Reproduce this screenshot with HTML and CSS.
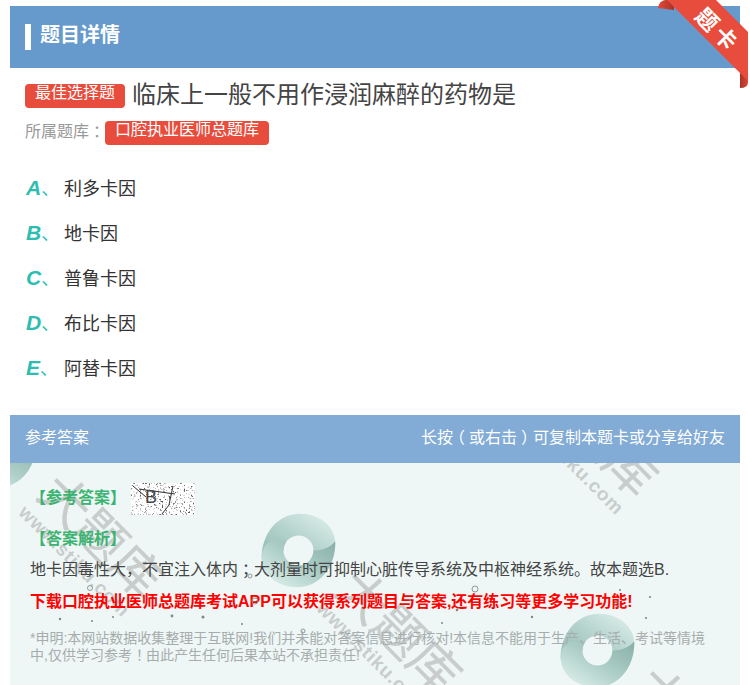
FILE: index.html
```html
<!DOCTYPE html>
<html lang="zh-CN">
<head>
<meta charset="utf-8">
<title>题目详情</title>
<link rel="stylesheet" href="styles.css">
</head>
<body>
<div class="ribbon">
  <svg class="ribbon-art" width="92" height="92" viewBox="0 0 92 92">
    <defs>
      <linearGradient id="foldA" x1="0" y1="0" x2="1" y2="0"><stop offset="0" stop-color="#e04a3c"/><stop offset="1" stop-color="#a93226"/></linearGradient>
      <linearGradient id="foldB" x1="0" y1="0" x2="1" y2="0"><stop offset="0" stop-color="#a93226"/><stop offset="1" stop-color="#dc4638"/></linearGradient>
    </defs>
    <path d="M0 8 Q1 1 7 0 L16 0 L16 10 Z" fill="url(#foldA)"/>
    <path d="M82 72 L90 72 L90 82 Q90 88 82 88 Z" fill="url(#foldB)"/>
    <polygon points="9,0 58,0 90,32 90,81 82,73" fill="#e74c3c"/>
  </svg>
  <span class="ribbon-text">题卡</span>
</div>
<main class="page">
  <header class="head"><i class="head-bar"></i><h1 class="head-title">题目详情</h1></header>
  <section class="question">
    <div class="q-row"><span class="tag">最佳选择题</span><h2 class="q-title">临床上一般不用作浸润麻醉的药物是</h2></div>
    <div class="lib-row"><span class="lib-label">所属题库<span class="cp-right">：</span></span><span class="tag">口腔执业医师总题库</span></div>
  </section>
  <ul class="options">
    <li class="option"><b class="opt-key">A<em>、</em></b><span>利多卡因</span></li>
    <li class="option"><b class="opt-key">B<em>、</em></b><span>地卡因</span></li>
    <li class="option"><b class="opt-key">C<em>、</em></b><span>普鲁卡因</span></li>
    <li class="option"><b class="opt-key">D<em>、</em></b><span>布比卡因</span></li>
    <li class="option"><b class="opt-key">E<em>、</em></b><span>阿替卡因</span></li>
  </ul>
  <section class="answer">
    <div class="ans-head"><span>参考答案</span><span>长按<span class="cp-left">（</span>或右击<span class="cp-right">）</span>可复制本题卡或分享给好友</span></div>
    <div class="ans-body">
      <div class="decor">
        <svg width="0" height="0" class="defs">
          <defs>
            <linearGradient id="swA" x1="0" y1="1" x2="1" y2="0"><stop offset="0" stop-color="#8fb8b0"/><stop offset=".5" stop-color="#b5d3cd"/><stop offset="1" stop-color="#e2f2ee"/></linearGradient>
            <linearGradient id="swB" x1="1" y1="0" x2="0" y2="1"><stop offset="0" stop-color="#86aea6"/><stop offset=".5" stop-color="#aecfc8"/><stop offset="1" stop-color="#e6f5f1"/></linearGradient>
            <symbol id="swirl" viewBox="0 0 100 100">
              <path d="M1 62 C0 28 22 1 52 1 C78 1 99 18 99 40 C99 58 88 68 66 62 A20 20 0 1 0 30 50 C18 50 8 54 1 62 Z" fill="url(#swA)"/>
              <path d="M99 38 C100 72 78 99 48 99 C22 99 1 82 1 60 C1 42 12 32 34 38 A20 20 0 1 0 70 50 C82 50 92 46 99 38 Z" fill="url(#swB)"/>
            </symbol>
            <filter id="grain" x="0" y="0" width="100%" height="100%">
              <feTurbulence type="fractalNoise" baseFrequency=".55" numOctaves="2" seed="7"/>
              <feColorMatrix values="0 0 0 0 0.1  0 0 0 0 0.1  0 0 0 0 0.1  3.4 3.4 0 0 -3.7"/>
            </filter>
          </defs>
        </svg>
        <svg class="swirl swirl-a" viewBox="0 0 100 100"><use href="#swirl"/></svg>
        <svg class="swirl swirl-b" viewBox="0 0 100 100"><use href="#swirl"/></svg>
        <svg class="swirl swirl-c" viewBox="0 0 100 100"><use href="#swirl"/></svg>
        <div class="wm wm-a"><span class="wm-big">大题库</span><span class="wm-small">www.stiku.com</span></div>
        <div class="wm wm-b"><span class="wm-big">大题库</span><span class="wm-small">www.stiku.com</span></div>
        <div class="wm wm-c"><span class="wm-big">大题库</span><span class="wm-small">www.stiku.com</span></div>
        <div class="wm wm-d"><span class="wm-big">大题库</span><span class="wm-small">www.stiku.com</span></div>
      </div>
      <div class="ans-line">
        <strong class="ans-key ans-key-up">【参考答案】</strong>
        <span class="ans-img">
          <svg width="64" height="32" viewBox="0 0 64 32">
            <rect width="64" height="32" fill="#fff"/>
            <rect width="64" height="32" filter="url(#grain)"/>
            <path d="M2 3 L15 14 M42 3 L38 22 L31 31 M8 6 L44 11" stroke="#333" stroke-width="1" fill="none"/>
          </svg>
          <span class="ans-letter">B</span>
        </span>
      </div>
      <div class="ans-sub"><strong class="ans-key">【答案解析】</strong></div>
      <p class="ans-text">地卡因毒性大，不宜注入体内<span class="cp-right">；</span>大剂量时可抑制心脏传导系统及中枢神经系统。故本题选B.</p>
      <p class="ans-promo">下载口腔执业医师总题库考试APP可以获得系列题目与答案,还有练习等更多学习功能!</p>
      <p class="ans-note">*申明:本网站数据收集整理于互联网!我们并未能对答案信息进行核对!本信息不能用于生产、生活、考试等情境中,仅供学习参考<span class="cp-right">！</span>由此产生任何后果本站不承担责任!</p>
      <svg class="specks" width="730" height="222" viewBox="0 0 730 222">
        <g fill="none" stroke="#8a9a98" stroke-width="1">
          <circle cx="80" cy="125" r="2.5"/><circle cx="245" cy="138" r="3"/><circle cx="293" cy="168" r="2"/>
          <circle cx="465" cy="126" r="3"/><circle cx="607" cy="141" r="2.2"/><circle cx="240" cy="113" r="2"/>
        </g>
        <g fill="#7c8a88">
          <circle cx="44" cy="133" r="1"/><circle cx="50" cy="156" r="1.2"/><circle cx="82" cy="158" r="1"/><circle cx="103" cy="154" r="1"/>
          <circle cx="162" cy="153" r="1.4"/><circle cx="193" cy="154" r="1.5"/><circle cx="232" cy="161" r="1"/><circle cx="300" cy="135" r="1"/>
          <circle cx="400" cy="137" r="1"/><circle cx="447" cy="147" r="1.3"/><circle cx="522" cy="154" r="1.2"/><circle cx="640" cy="134" r="1.1"/>
          <circle cx="636" cy="155" r="1.1"/><circle cx="610" cy="127" r="1"/><circle cx="561" cy="131" r="1"/><circle cx="432" cy="160" r="1"/>
        </g>
      </svg>
    </div>
  </section>
</main>
</body>
</html>
```

FILE: styles.css
```css
* { box-sizing: border-box; }
html, body { margin: 0; padding: 0; height: 685px; overflow: hidden; background: #fff; }
body { position: relative; font-family: "Liberation Sans", "Noto Sans CJK SC", sans-serif; color: #333; }
h1, h2, p, ul { margin: 0; padding: 0; font-weight: normal; }
ul { list-style: none; }
em { font-style: normal; }
.cp-right { margin-left: 4px; margin-right: -4px; }
.cp-left { margin-left: -4px; margin-right: 4px; }

.page { width: 730px; margin: 6px 0 0 10px; }

.head { height: 62px; background: #6699cc; display: flex; align-items: center; gap: 9px; padding-left: 15px; }
.head-bar { width: 6px; height: 26px; background: #fff; display: block; }
.head-title { font-size: 20px; line-height: 26px; font-weight: 700; color: #fff; margin-top: -4px; }

.ribbon { position: absolute; left: 658px; top: 0; width: 92px; height: 92px; z-index: 5; }
.ribbon-art { display: block; }
.ribbon-text { position: absolute; left: 29px; top: 17px; width: 60px; text-align: center; font-size: 22px; line-height: 28px; font-weight: 700; letter-spacing: 4px; color: #fff; white-space: nowrap; transform: rotate(45deg); }

.question { padding: 16px 15px 0; }
.q-row { display: flex; align-items: center; gap: 7px; height: 24px; }
.tag { display: inline-block; height: 24px; padding: 0 10px; border-radius: 4px; background: #e74c3c; color: #fff; font-size: 16px; line-height: 18px; white-space: nowrap; }
.q-title { font-size: 24px; line-height: 24px; color: #444; margin-top: -2px; white-space: nowrap; }
.lib-row { display: flex; align-items: center; height: 24px; margin-top: 13px; }
.lib-label { font-size: 16px; line-height: 20px; color: #999; width: 80px; margin-top: -3px; white-space: nowrap; }

.options { padding: 21px 0 24px 16px; }
.option { height: 45px; display: flex; align-items: center; font-size: 18px; line-height: 24px; color: #333; }
.opt-key { width: 38px; font-size: 21px; font-weight: 700; font-style: italic; color: #2dbdb1; white-space: nowrap; }
.opt-key em { font-size: 18px; font-weight: 400; }

.ans-head { height: 48px; background: #82abd6; color: #fff; font-size: 16px; display: flex; align-items: center; justify-content: space-between; padding: 0 15px 7px; }
.ans-body { position: relative; height: 230px; background: #eef7f6; padding: 20px 20px 0; overflow: hidden; }
.ans-body > *:not(.decor):not(.specks) { position: relative; }

.decor, .specks { position: absolute; left: 0; top: 0; }
.decor { width: 730px; height: 230px; }
.defs { position: absolute; }
.swirl { position: absolute; width: 75px; height: 75px; }
.swirl-a { left: 251px; top: 50px; }
.swirl-b { left: 550px; top: 150px; }
.swirl-c { left: -48px; top: -50px; }

.wm { position: absolute; display: flex; flex-direction: column; transform: rotate(45deg); transform-origin: left top; color: #c8cdcc; white-space: nowrap; }
.wm-big { font-size: 50px; line-height: 50px; height: 50px; -webkit-text-stroke: .3px #c8cdcc; }
.wm-small { font-size: 19px; line-height: 22px; font-weight: 700; letter-spacing: .8px; }
.wm-a { left: 55px; top: 3px; }
.wm-b { left: 353px; top: 99px; }
.wm-c { left: 549px; top: -99px; }
.wm-d { left: 651px; top: 196px; }

.ans-line { display: flex; align-items: center; gap: 5px; height: 32px; }
.ans-key { font-size: 16px; line-height: 24px; font-weight: 700; color: #3cb371; white-space: nowrap; }
.ans-key-up { margin-top: -3px; }
.ans-img { position: relative; display: block; width: 64px; height: 32px; }
.ans-img svg { display: block; }
.ans-letter { position: absolute; left: 14px; top: 2px; font-size: 18px; line-height: 24px; color: #444; }
.ans-sub { height: 24px; margin-top: 12px; }
.ans-text { font-size: 16px; line-height: 24px; color: #444; margin-top: 7px; white-space: nowrap; }
.ans-promo { font-size: 16px; line-height: 24px; font-weight: 700; color: #f00; margin-top: 8px; white-space: nowrap; }
.ans-note { font-size: 14px; line-height: 17px; color: #a6adac; margin-top: 16px; width: 680px; }
```
